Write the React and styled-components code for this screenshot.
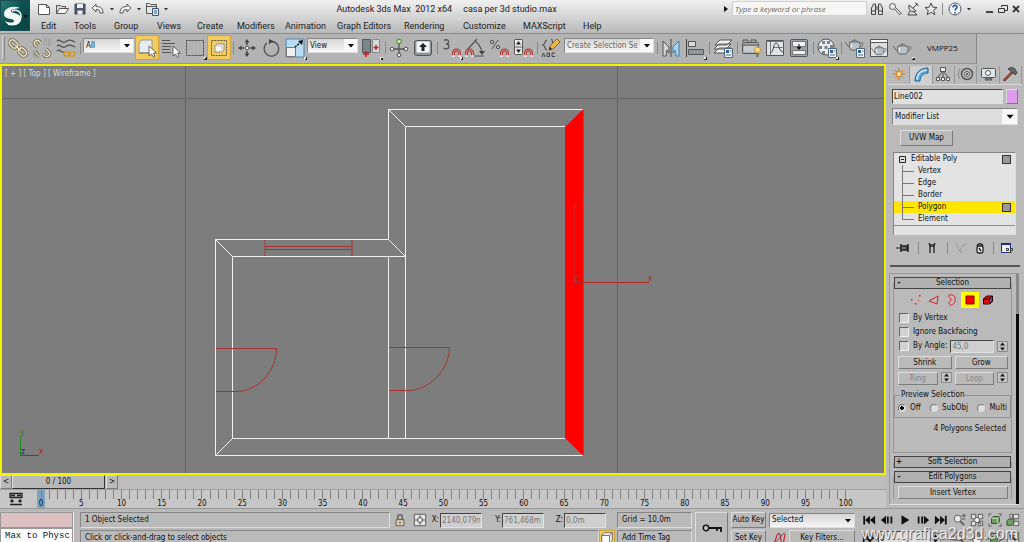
import React from 'react';
import styled, { createGlobalStyle, css } from 'styled-components';

const GlobalStyle = createGlobalStyle`
  * {
    box-sizing: border-box;
  }
  body {
    margin: 0;
    background: #bababa;
  }
  body, button, input, select {
    font-family: "DejaVu Sans Condensed", "DejaVu Sans", sans-serif;
    font-size: 8px;
    line-height: 10px;
    color: #111;
  }
  button, input, select, fieldset {
    margin: 0;
    padding: 0;
    border: 0;
    border-radius: 0;
    background: none;
  }
  svg {
    display: block;
    flex: none;
  }
`;

const raised = css`
  border: 1px solid;
  border-color: #dcdcdc #7c7c7c #7c7c7c #dcdcdc;
`;

const sunken = css`
  border: 1px solid;
  border-color: #858585 #dedede #dedede #858585;
`;

const AppContainer = styled.div`
  display: flex;
  flex-direction: column;
  height: 100vh;
  width: 100%;
  overflow: hidden;
`;

/* title and menus */

const Header = styled.header`
  display: flex;
  height: 34px;
  flex: none;
  background: linear-gradient(#f0f0f0, #d8d8d8 45%, #b8b8b8);
  border-bottom: 1px solid #8c8c8c;
`;

const AppButton = styled.button`
  width: 30px;
  height: 31px;
  background: linear-gradient(135deg, #2a7d78, #0b5150 45%, #0a4344);
  border: 1px solid #1b4d4e;
`;

const HeaderRows = styled.div`
  flex: 1;
  display: flex;
  flex-direction: column;
`;

const TitleRow = styled.div`
  display: flex;
  align-items: center;
  height: 18px;
`;

const QuickAccess = styled.div`
  display: flex;
  align-items: center;
  padding-left: 5px;
`;

const QuickButton = styled.button`
  display: flex;
  justify-content: center;
  width: ${props => (props.$small ? 9 : 18)}px;
`;

const Title = styled.h1`
  flex: 1;
  display: flex;
  justify-content: center;
  gap: 11px;
  margin: 0;
  font: 400 9px/12px Roboto, sans-serif;
  white-space: pre;
  color: #222;
`;

const InfoCenter = styled.div`
  display: flex;
  align-items: center;
`;

const SearchInput = styled.input`
  width: 135px;
  height: 15px;
  margin: 0 1px 0 3px;
  padding: 0 2px;
  background: #f6f6f6;
  border: 1px solid #d0d0d0;
  font: italic 8px/10px "Open Sans", sans-serif;
  &::placeholder {
    color: #666;
    opacity: 1;
  }
`;

const WindowButtons = styled.div`
  display: flex;
  padding: 0 2px 0 10px;
`;

const WindowButton = styled.button`
  display: flex;
  justify-content: center;
  width: 13px;
`;

const Menu = styled.nav`
  display: grid;
  grid-template-columns: 33px 40px 43px 40px 40px 48px 52px 67px 59px 60px 60px 40px;
  padding-left: 11px;
  height: 16px;
`;

const MenuItem = styled.button`
  display: flex;
  align-items: center;
  padding-top: 2px;
  font: 400 9px/12px Roboto, sans-serif;
  color: #1c1c1c;
  white-space: nowrap;
`;

/* main toolbar */

const Toolbar = styled.div`
  display: flex;
  align-items: center;
  align-self: flex-start;
  flex: none;
  height: 30px;
  padding: 0 18px 2px 0;
  background: #b3b3b3;
  border-right: 1px solid #858585;
  border-bottom: 1px solid #969696;
`;

const Handle = styled.div`
  width: 3px;
  height: 24px;
  margin: 0 1px 0 2px;
  border: 1px solid;
  border-color: #cfcfcf #8a8a8a #8a8a8a #cfcfcf;
`;

const ToolButton = styled.button`
  position: relative;
  display: flex;
  align-items: center;
  justify-content: center;
  width: 24px;
  height: 25px;
  ${props => props.$active && css`
    background: #f3cb5c;
    border: 1px solid #cfa23a;
  `}
  ${props => props.$flyout && css`
    &::after {
      content: '';
      position: absolute;
      right: 0;
      bottom: 0;
      width: 3px;
      height: 3px;
      background: linear-gradient(135deg, #eee 50%, #222 50%);
    }
  `}
`;

const Separator = styled.div`
  width: 1px;
  height: 12px;
  margin: 0 1px 0 2px;
  background: #878787;
`;

const SelectBox = styled.label`
  position: relative;
  display: block;
  width: ${props => (props.$width ? props.$width + 'px' : 'auto')};
  margin: ${props => props.$margin || '0'};
  svg {
    position: absolute;
    right: 1px;
    top: 1px;
    pointer-events: none;
  }
`;

const Select = styled.select`
  display: block;
  width: 100%;
  height: ${props => props.$height || 15}px;
  padding: 0 14px 0 2px;
  appearance: none;
  background: ${props => props.$fill || 'linear-gradient(#d6d6d6, #f6f6f6)'};
  color: ${props => props.$color || '#111'};
  ${sunken}
`;

const MacroButton = styled.button`
  margin-left: 12px;
  font: 400 8px/10px "Open Sans", sans-serif;
`;

/* viewport */

const Main = styled.main`
  flex: 1;
  display: flex;
  min-height: 0;
`;

const Work = styled.div`
  flex: 1;
  display: flex;
  flex-direction: column;
  min-width: 0;
`;

const Viewport = styled.section`
  position: relative;
  flex: 1;
  min-height: 0;
  background: #7d7d7d;
  border: 2px solid #f2f200;
  svg {
    width: 100%;
    height: 100%;
  }
`;

const ViewportLabel = styled.div`
  position: absolute;
  left: 3px;
  top: 3px;
  color: #dadada;
`;

const TimeSlider = styled.div`
  display: flex;
  height: 14px;
  background: #bdbdbd;
`;

const SliderButton = styled.button`
  width: ${props => props.$width || 12}px;
  height: 14px;
  background: #b9b9b9;
  ${raised}
  ${props => props.$width && css`
    border-right-color: #333;
    border-bottom-color: #333;
    margin-right: 1px;
  `}
`;

const TrackBar = styled.div`
  display: flex;
  height: 19px;
  background: #c6c6c6;
  border-top: 1px solid #a0a0a0;
  padding-right: 37px;
`;

const CurveButton = styled.button`
  display: flex;
  align-items: center;
  justify-content: center;
  width: 37px;
  padding-right: 6px;
`;

const Ruler = styled.div`
  flex: 1;
  display: flex;
`;

const Frame = styled.div`
  flex: 1 1 0;
  width: 0;
  display: flex;
  flex-direction: column;
  align-items: center;
  background: ${props => (props.$current ? '#7fa3bf' : 'none')};
  &::before {
    content: '';
    flex: none;
    width: 1px;
    height: 9px;
    background: #808080;
  }
`;

/* command panel */

const CommandPanel = styled.aside`
  width: 138px;
  flex: none;
  display: flex;
  flex-direction: column;
  padding: 2px 6px 0;
  background: #bababa;
`;

const Tabs = styled.div`
  display: flex;
  margin: 0 -4px 4px;
  border-bottom: 1px solid #d8d8d8;
`;

const Tab = styled.button`
  flex: 1;
  display: flex;
  justify-content: center;
  height: 18px;
  border-right: 1px solid #999;
  background: ${props => (props.$active ? '#cfcfcf' : 'none')};
`;

const NameRow = styled.div`
  display: flex;
  gap: 3px;
  margin-bottom: 4px;
`;

const Field = styled.input`
  flex: ${props => (props.$width ? 'none' : '1')};
  width: ${props => props.$width || 0}px;
  min-width: 0;
  height: ${props => props.$height || 15}px;
  padding: 0 1px;
  background: ${props => (props.$muted ? '#cfcfcf' : '#e0e0e0')};
  color: ${props => (props.$muted ? '#777' : '#111')};
  border: 1px solid;
  border-color: #444 #e0e0e0 #e0e0e0 #444;
`;

const Swatch = styled.button`
  width: 12px;
  height: 15px;
  background: #df9bee;
  ${raised}
`;

const PushButton = styled.button`
  flex: ${props => (props.$width ? 'none' : '1')};
  width: ${props => (props.$width ? props.$width + 'px' : 'auto')};
  height: ${props => props.$height || 13}px;
  color: ${props => (props.disabled ? '#868686' : '#111')};
  background: #bababa;
  white-space: nowrap;
  ${raised}
`;

const SetRow = styled.div`
  display: flex;
  padding: 5px 0 6px 8px;
`;

const Stack = styled.ul`
  height: 83px;
  flex: none;
  margin: 0 2px 4px 1px;
  padding: 0;
  list-style: none;
  background: #e3e3e3;
  ${sunken}
`;

const StackRow = styled.li`
  display: flex;
  align-items: center;
  height: 12px;
  padding: 0 4px;
  background: ${props => (props.$selected ? '#ffe600' : 'none')};
  span {
    flex: 1;
    padding-left: 4px;
  }
`;

const StackEnd = styled.li`
  border-top: 1px solid #8c8c8c;
`;

const StackMark = styled.i`
  width: 9px;
  height: 9px;
  background: #999;
  border: 1px solid #333;
`;

const StackTools = styled.div`
  display: flex;
  align-items: center;
  justify-content: space-between;
  height: 17px;
  padding: 0 4px 0 3px;
  margin-bottom: 9px;
`;

const Divider = styled.div`
  height: 2px;
  flex: none;
  margin: 0 -2px 6px;
  background: #555;
`;

const Rollouts = styled.div`
  flex: 1;
  min-height: 0;
  margin: 0 -1px 3px -3px;
  display: flex;
  border-top: 1px solid #999;
  border-left: 1px solid #999;
  border-bottom: 1px solid #ddd;
`;

const RolloutList = styled.div`
  flex: 1;
  min-width: 0;
  padding: 3px 4px 0 3px;
`;

const ScrollTrack = styled.div`
  display: flex;
  width: 3px;
  padding-top: 40px;
  background: #8a8a8a;
  &::after {
    content: '';
    flex: 1;
    background: #0c0c0c;
  }
`;

const Rollout = styled.section`
  margin: 0 0 3px;
  padding: 0 1px;
  background: linear-gradient(#999, #999) 0 6px / 1px 100% no-repeat,
    linear-gradient(#999, #999) 100% 6px / 1px 100% no-repeat;
  border-bottom: ${props => (props.$boxed ? '1px solid #999' : '0')};
`;

const RolloutHead = styled.button`
  display: grid;
  grid-template-columns: 8px 1fr 8px;
  width: 100%;
  height: 12px;
  background: #b0b0b0;
  border: 1px solid #444;
`;

const RolloutBody = styled.div`
  display: flex;
  flex-direction: column;
  gap: 3px;
  padding: 3px 3px 0 4px;
`;

const SubObjects = styled.div`
  display: flex;
  padding-left: 9px;
`;

const SubObject = styled.button`
  display: flex;
  align-items: center;
  justify-content: center;
  width: 18px;
  height: 16px;
  background: ${props => (props.$active ? '#ffff00' : 'none')};
`;

const Checks = styled.div`
  display: grid;
  grid-auto-rows: 14px;
`;

const CheckRow = styled.div`
  display: flex;
  align-items: center;
  gap: 3px;
  label {
    display: flex;
    align-items: center;
    gap: 3px;
    white-space: nowrap;
  }
`;

const Checkbox = styled.input.attrs({ type: 'checkbox' })`
  appearance: none;
  width: 10px;
  height: 10px;
  margin: 0 1px 0 1px;
  background: #d2d2d2;
  border: 1px solid;
  border-color: #666 #eee #eee #666;
`;

const Radio = styled.input.attrs({ type: 'radio' })`
  appearance: none;
  width: 8px;
  height: 8px;
  border-radius: 50%;
  background: #e0e0e0;
  border: 1px solid;
  border-color: #777 #ddd #ddd #777;
  &:checked {
    background: radial-gradient(#000 0 2px, #e0e0e0 2px);
  }
`;

const ButtonRow = styled.div`
  display: flex;
  gap: 3px;
`;

const Group = styled.fieldset`
  min-width: 0;
  margin: 2px -3px 0 -4px;
  padding: 0 2px 4px 3px;
  border: 1px solid #929292;
  legend {
    margin-left: 2px;
    padding: 0 1px;
  }
`;

const Radios = styled.div`
  display: flex;
  justify-content: space-between;
  padding: 3px 1px 0 0;
  label {
    display: flex;
    align-items: center;
    gap: 4px;
  }
`;

const Info = styled.p`
  margin: 3px 2px 18px;
  text-align: right;
`;

/* status bar */

const StatusBar = styled.footer`
  position: relative;
  flex: none;
  display: flex;
  height: 34px;
  padding-top: 3px;
  overflow: hidden;
  background: #bababa;
  border-top: 1px solid #999;
`;

const Listener = styled.div`
  width: 74px;
  flex: none;
  border-right: 1px solid #eee;
  margin-right: 6px;
`;

const ListenerLine = styled.input`
  display: block;
  width: 100%;
  height: 16px;
  padding-left: 4px;
  background: ${props => (props.$pink ? '#dcc0c2' : '#fff')};
  font: 400 9px/12px "Liberation Mono", monospace;
  border: 1px solid #999;
`;

const Column = styled.div`
  display: flex;
  flex-direction: column;
  gap: 2px;
  flex: ${props => (props.$grow ? '1' : 'none')};
  min-width: 0;
  margin-right: ${props => props.$space || 0}px;
`;

const Line = styled.div`
  display: flex;
  align-items: center;
  height: 16px;
  flex: none;
  padding-right: ${props => props.$inset || 0}px;
`;

const Prompt = styled.div`
  flex: ${props => (props.$width ? 'none' : '1')};
  width: ${props => (props.$width ? props.$width + 'px' : 'auto')};
  height: 16px;
  padding: 2px 4px;
  white-space: nowrap;
  ${sunken}
`;

const SmallButton = styled.button`
  display: flex;
  align-items: center;
  justify-content: center;
  width: ${props => props.$width || 20}px;
  height: 16px;
  ${props => props.$active && css`
    background: #f3cb5c;
    border: 1px solid #cfa23a;
  `}
`;

const Coordinate = styled.label`
  display: flex;
  align-items: center;
  justify-content: flex-end;
  width: ${props => props.$width || 62}px;
  gap: 1px;
`;

const KeyButton = styled.button`
  display: flex;
  align-items: center;
  justify-content: center;
  width: 33px;
  height: 34px;
  margin: 0 3px;
  flex: none;
  ${raised}
`;

const Spacer = styled.div`
  width: 2px;
  flex: none;
`;

const Watermark = styled.div`
  position: absolute;
  right: 6px;
  bottom: -2px;
  font: 400 16px/20px "Liberation Sans", sans-serif;
  color: #e9e9e9;
  text-shadow: 1px 1px 1px #555;
`;

const Icon = ({ size = 20, box = 20, children }) => (
  <svg
    width={size}
    height={size}
    viewBox={`0 0 ${box} ${box}`}
    fill="none"
    stroke="#555"
    aria-hidden="true"
  >
    {children}
  </svg>
);

const Caret = ({ light = true, size = 13 }) => (
  <Icon size={size} box={13}>
    {light && <path d="M0 0h13v13H0z" fill="#f8f8f8" stroke="none" />}
    <path d="M4 5h6L7 8.500z" fill="#000" stroke="none" />
  </Icon>
);

const magnet = (
  <g>
    <path d="M12.500 18v-3a3 3 0 0 1 6 0v3" stroke="#a33a35" strokeWidth="3" />
    <path d="M12.500 18v-3a3 3 0 0 1 6 0v3" stroke="#f0938a" strokeWidth="1" />
    <path d="M11 18h3M17 18h3" stroke="#eee" strokeWidth="1.500" />
  </g>
);

const teapot = (
  <g stroke="#666">
    <path d="M5 8h9c2 3 1 6-1 8H6C4 14 4 11 5 8z" fill="#b9c2c9" />
    <path d="M5 13C2 13 2 9 0 8M14.500 9c4-2 5 3 0 4M6 8c1-2 6-2 7 0M9.500 5v1" />
    <path d="M7 9.500c-1 1.500-1 3 0 4" stroke="#fff" />
  </g>
);

const settingsBadge = (
  <g>
    <path d="M11.500 10.500h8v9h-8z" fill="#eef2f6" stroke="#567" />
    <path d="M13 12h3v3h-3z" fill="#2a62a8" stroke="none" />
    <path d="M17 13h1.500M13 17h5" stroke="#567" />
  </g>
);

const cursor = (
  <path d="M12 8v10l2.500-2 2 3.500 1.500-1-1.500-3.500h3z" fill="#fff" stroke="#444" strokeWidth=".8" />
);

const tools = {
  link: (
    <g strokeWidth="3.200" stroke="#6b6756">
      <rect x="1" y="3" width="9" height="6" rx="3" transform="rotate(45 5.500 6)" />
      <rect x="10" y="11" width="9" height="6" rx="3" transform="rotate(45 14.500 14)" />
      <path d="M7 7l6 6" />
      <g stroke="#f0e3b8" strokeWidth="1.500">
        <rect x="1" y="3" width="9" height="6" rx="3" transform="rotate(45 5.500 6)" />
        <rect x="10" y="11" width="9" height="6" rx="3" transform="rotate(45 14.500 14)" />
        <path d="M7 7l6 6" />
      </g>
    </g>
  ),
  unlink: (
    <g>
      <path d="M5 9L3 7C1 5 4 1 7 3l2 2M14 11l3 3c2 2-1 6-4 4l-2-2M3 14l4 4" stroke="#6b6756" strokeWidth="3.200" />
      <path d="M5 9L3 7C1 5 4 1 7 3l2 2M14 11l3 3c2 2-1 6-4 4l-2-2M3 14l4 4" stroke="#f0e3b8" strokeWidth="1.500" />
      <path d="M12 1h7M12 3h7M12 5h7M12 7h7M1 13h5M1 15h5M1 17h5M1 19h6" stroke="#8a8a8a" strokeDasharray="1 1" />
    </g>
  ),
  bind: (
    <g>
      <path d="M1 3c3-3 5 3 8 1s5-3 10 0M1 8c3-3 5 3 8 1s5-3 10 0M1 13c3-3 5 3 8 1" strokeWidth="1.300" />
      <rect x="8" y="14" width="6" height="4" rx="2" stroke="#d39a24" strokeWidth="1.600" />
      <rect x="13" y="14" width="6" height="4" rx="2" stroke="#d39a24" strokeWidth="1.600" />
    </g>
  ),
  select: (
    <g>
      <path d="M2 5l3-3h10v10l-3 3H2z" fill="#e8edf2" stroke="#999" />
      <path d="M2 15h10l3-3" stroke="#777" />
      {cursor}
    </g>
  ),
  byName: (
    <g>
      <path d="M1 2.500h8M1 5.500h13M1 8.500h9M1 11.500h8M1 14.500h9" />
      {cursor}
    </g>
  ),
  region: <path d="M1.500 2.500h17v15h-17z" strokeDasharray="2 1" stroke="#444" />,
  crossing: (
    <g>
      <path d="M2.500 2.500h15v15h-15z" strokeDasharray="2 1" stroke="#555" />
      <path d="M6 8l2-2h7v6l-2 2H6z" fill="#fff" stroke="#889" />
      <path d="M6 8h7v6" stroke="#bbb" />
    </g>
  ),
  move: (
    <g>
      <path d="M10 3v4M10 13v4M3 10h4M13 10h4" stroke="#444" strokeWidth="1.500" />
      <path d="M10 1l2.500 3.500h-5zM10 19l2.500-3.500h-5zM1 10l3.500-2.500v5zM19 10l-3.500-2.500v5z" fill="#444" stroke="none" />
      <circle cx="10" cy="10" r="1.800" fill="#eee" />
    </g>
  ),
  rotate: (
    <g>
      <path d="M11 3.500a7.300 7.300 0 1 1-5 1.500" strokeWidth="1.300" />
      <path d="M8 1l5 2.500L8 6z" fill="#444" stroke="none" />
    </g>
  ),
  scale: (
    <g>
      <path d="M1 1h18v18H1z" fill="#b9dcf4" stroke="#4b86b4" />
      <path d="M1.500 9.500h9v9h-9z" fill="#f0f0f0" stroke="#777" />
      <path d="M10 9l6-5" stroke="#111" strokeWidth="1.500" strokeDasharray="2 1" />
      <path d="M18 2l-1 5-4-4z" fill="#111" stroke="none" />
    </g>
  ),
  pivot: (
    <g>
      <path d="M1.500 1.500h8v13h-8z" fill="#7d838a" />
      <path d="M11.500 1.500h7v13h-7z" fill="#d4dae0" stroke="#888" />
      <path d="M5 13v6M2 16h6M15 7v5M12.500 9.500h5" stroke="#d01818" strokeWidth="1.500" />
    </g>
  ),
  manipulate: (
    <g>
      <path d="M10 4v13M3 11h14" strokeWidth="1.300" />
      <circle cx="10" cy="3.500" r="2.300" fill="#bfe6a0" stroke="#3b8a2a" />
      <circle cx="3" cy="11" r="1.800" fill="#eee" />
      <circle cx="17" cy="11" r="1.800" fill="#eee" />
      <circle cx="10" cy="17" r="1.800" fill="#eee" />
    </g>
  ),
  keyboard: (
    <g>
      <rect x="1.500" y="2.500" width="17" height="15" rx="2" fill="#8d959c" />
      <rect x="3.500" y="3.500" width="13" height="11" rx="1" fill="#f2f5f7" stroke="#ccc" />
      <path d="M10 5l4 4h-2.500v4h-3V9H6z" fill="#222" stroke="none" />
    </g>
  ),
  snap: (
    <g>
      <path d="M3 2.500c2-1.500 5-.5 4.500 1.500C7.500 5.500 6 6 5 6c1.500 0 3 .7 3 2.500 0 2.500-3.500 3-5.500 1.500" strokeWidth="1.300" />
      {magnet}
    </g>
  ),
  angle: (
    <g>
      <path d="M2 12L12 1M9 18h10M10 3c4 3 6 7 7 11" strokeWidth="1.200" />
      <path d="M14 13h6l-3 4z" fill="#444" stroke="none" />
      <g transform="translate(-11 0)">{magnet}</g>
    </g>
  ),
  percent: (
    <g>
      <circle cx="3" cy="4" r="1.700" />
      <circle cx="9" cy="9" r="1.700" />
      <path d="M9 2l-6 9" />
      {magnet}
    </g>
  ),
  spinner: (
    <g>
      <rect x="1.500" y="1.500" width="8" height="15" rx="1" fill="#e8ecef" />
      <path d="M5.500 3L8 6.500H3zM5.500 15L8 11.500H3z" fill="#222" stroke="none" />
      <path d="M2 9h7" />
      {magnet}
    </g>
  ),
  named: (
    <g>
      <path d="M6 2C3 2 5 6 2 7c3 1 1 5 4 5M10 1c2 0 1 2 1.500 4" strokeWidth="1.200" />
      <path d="M8 12l1-4 7-7 3 3-7 7z" fill="#efb74a" stroke="#8a6420" />
      <path d="M8 12l1-3 2 2z" fill="#222" stroke="none" />
      <path d="M1 19l1.500-4L4 19M6 15v3.500h2.500V15zM14 15h-3v3.500h3" stroke="#444" />
    </g>
  ),
  mirror: (
    <g>
      <path d="M2 3l6 6v6l-2-3-1 6H2z" fill="#ccd2d7" />
      <path d="M18 3l-6 6v6l2-3 1 6h3z" fill="#a9d5f2" stroke="#3f7fae" />
      <path d="M10 1v18" stroke="#444" />
    </g>
  ),
  align: (
    <g>
      <path d="M1.500 1v18" stroke="#444" />
      <path d="M3.500 3.500h7v5h-7z" fill="#d8dde1" />
      <path d="M3.500 11.500h15v5h-15z" fill="#8f97a0" />
    </g>
  ),
  layers: (
    <g>
      <path d="M1 15l5-5h12l-5 5zM1 11l5-5h12l-5 5zM2 7l5-5h12l-5 5z" fill="#eef0f2" />
      {settingsBadge}
    </g>
  ),
  ribbon: (
    <g>
      <rect x="1.500" y="4.500" width="16" height="11" rx="1" fill="#a8afb6" />
      <path d="M2 4V2h5v2M10 4V2h5v2M2 7h15" />
      <path d="M3 8h13v6H3z" fill="#c6ccd1" stroke="none" />
      <circle cx="16.500" cy="12" r="3" fill="#f8d878" stroke="#c79b38" />
      <path d="M15 16h3M15 18h3" />
    </g>
  ),
  curve: (
    <g>
      <path d="M1.500 2.500h17v15h-17z" fill="#dfe3e6" />
      <path d="M1 3.500h18M5.500 3v14M8 9.500h11" stroke="#777" />
      <path d="M5 15c4 0 3-10 6-10s3 10 8 9" stroke="#444" />
    </g>
  ),
  schematic: (
    <g>
      <rect x="1.500" y="1.500" width="17" height="17" rx="1" fill="#9aa1a8" />
      <path d="M3.500 3.500h13v5h-13zM3.500 12.500h13v4h-13z" fill="#eef0f2" stroke="#777" />
      <path d="M10 6v4" stroke="#111" />
      <path d="M7.500 9h5L10 12z" fill="#111" stroke="none" />
    </g>
  ),
  material: (
    <g>
      <circle cx="9" cy="9" r="8" fill="#e8ebee" />
      <path d="M5 3h3v3H5zM10 3h3v3h-3zM2 8h3v3H2zM7.500 8h3v3h-3zM5 13h3v3H5zM13 7h3v3h-3z" fill="#7b848c" stroke="none" />
      {settingsBadge}
    </g>
  ),
  renderSetup: (
    <g>
      <g transform="translate(0 -4)">{teapot}</g>
      {settingsBadge}
    </g>
  ),
  renderFrame: (
    <g>
      <path d="M1.500 1.500h17v17h-17z" fill="#dde1e4" />
      <path d="M1.500 1.500h17v3h-17z" fill="#fff" />
      <g transform="translate(2 3) scale(.85)">{teapot}</g>
    </g>
  ),
  render: teapot,
};

const quick = {
  new: <path d="M1.500 2.500h8l3 3v7h-11zM9.500 2.500v3h3" fill="#fafafa" />,
  open: (
    <g>
      <path d="M1.500 11.500v-8h4l1 1h4v2" fill="#ddd" />
      <path d="M1.500 11.500l3-5h9l-3 5z" fill="#f4f4f4" />
    </g>
  ),
  save: (
    <g>
      <path d="M2 2h10v10H2z" fill="#4d5966" stroke="#445" />
      <path d="M4 2h6v4H4zM4.500 8.500h5v4h-5z" fill="#eee" stroke="none" />
    </g>
  ),
  undo: <path d="M1 6l4-4v2.500c5 0 7 2 7 6.500h-3c0-3-1-3.500-4-3.500V10z" fill="#f4f4f4" />,
  redo: <path d="M13 6L9 2v2.500c-5 0-7 2-7 6.500h3c0-3 1-3.500 4-3.500V10z" fill="#f4f4f4" />,
  project: (
    <g>
      <path d="M1.500 1.500h3l1 1h6v9h-10zM1.500 4.500h10" fill="#e8e8e8" />
      <path d="M7.500 6.500h6v7h-6z" fill="#dce8f4" stroke="#456" />
      <path d="M9 9h3M9 11h3" stroke="#26a" />
    </g>
  ),
  binoculars: (
    <g>
      <path d="M1.500 12.500V6l2-4h2v10.500zM12.500 12.500V6l-2-4h-2v10.500z" fill="#ddd" stroke="#444" />
      <path d="M6 5h2M6 7h2M2 9h3.500M8.500 9H12" stroke="#444" />
    </g>
  ),
  key: (
    <g>
      <circle cx="4.500" cy="4.500" r="3" fill="#eee" />
      <path d="M6.500 7l5 5.500 2-1-6-6" fill="#eee" />
    </g>
  ),
  dish: (
    <g stroke="#444">
      <path d="M3 3c-1 5 2 8 7 6z" fill="#ddd" />
      <path d="M7 6l3-3M10 2l1 1M4 9l-2 4h9l-3-3M9 1c2 0 3 1 3 3" />
    </g>
  ),
  star: <path d="M7 1l1.800 4.200 4.200.3-3.300 2.800 1.100 4.400L7 10.300l-3.800 2.400 1.100-4.400L1 5.500l4.200-.3z" fill="#eee" stroke="#444" />,
  help: (
    <g>
      <circle cx="7" cy="7" r="6" fill="#f4f7fb" stroke="#556" />
      <path d="M5 5.500c0-3 4-2.500 4-.3C9 6.500 7 6.700 7 8.500M7 10v1.500" stroke="#1c56a8" strokeWidth="1.600" />
    </g>
  ),
};

const tabIcons = [
  ['Create', (
    <g key="c" stroke="#d8761a">
      <path d="M8 2v12M2 8h12M4 4l8 8M12 4l-8 8" />
      <circle cx="8" cy="8" r="2.500" fill="#fff0a0" />
    </g>
  )],
  ['Modify', (
    <g key="m">
      <path d="M2 15C2 7 7 2 15 2v5c-5 0-8 3-8 8z" fill="#5fa8dc" stroke="#27618f" />
      <path d="M4 14C4 8 8 4 14 4" stroke="#c8e6fa" strokeWidth="1.500" />
    </g>
  )],
  ['Hierarchy', (
    <g key="h">
      <path d="M5.500 1.500h5v4h-5zM1.500 11.500h3v3h-3zM6.500 11.500h3v3h-3zM11.500 11.500h3v3h-3z" fill="#eee" />
      <path d="M8 6v5M7 6l-4 5M9 6l4 5" />
    </g>
  )],
  ['Motion', (
    <g key="o">
      <circle cx="9" cy="8" r="5.500" fill="#bbb" strokeWidth="1.500" />
      <circle cx="9" cy="8" r="2.500" fill="#eee" />
      <circle cx="9" cy="8" r=".8" fill="#333" />
      <path d="M2 3c-2 3-2 7 0 10" stroke="#888" />
    </g>
  )],
  ['Display', (
    <g key="d">
      <rect x="1.500" y="2.500" width="14" height="9" rx="1" fill="#dfe5ea" />
      <circle cx="8" cy="7" r="2.500" fill="#fff" />
      <path d="M5 14h7l-1-2H6z" fill="#888" />
    </g>
  )],
  ['Utilities', (
    <g key="u">
      <path d="M1 14L9 6l1.500 1.500L3 15z" fill="#a5532d" stroke="#633" strokeWidth=".8" />
      <path d="M6 3c3-2 5-2 7 0l2 4-2 2-3-3z" fill="#666" stroke="#333" strokeWidth=".8" />
    </g>
  )],
];

const play = {
  first: <path d="M1.500 3h2v10h-2zM9 3v10L3.500 8zM15 3v10L9 8z" />,
  previous: <path d="M7 3v10L1 8zM8 4h2v8H8zM12 4h2v8h-2z" />,
  play: <path d="M4 2.500v11L13 8z" />,
  next: <path d="M9 3v10l6-5zM6 4h2v8H6zM2 4h2v8H2z" />,
  last: <path d="M14.500 3h-2v10h2zM7 3v10l5.500-5zM1 3v10l6-5z" />,
  mode: <path d="M1 3h2v10H1zM9 3v10L3.500 8zM9 3v10l5-5z" />,
};

const zoomIcon = (
  <g>
    <circle cx="6.500" cy="6.500" r="4" fill="#e8e8e8" />
    <path d="M9.500 9.500L14 14" strokeWidth="2" />
    <path d="M11 3h5M13.500.5v5M11 7h4" />
  </g>
);

const zoomAllIcon = (
  <g>
    <path d="M1.500 1.500h5v5h-5zM9.500 1.500h5v5h-5zM1.500 9.500h5v5h-5zM9.500 9.500h5v5h-5z" fill="#ddd" />
    <circle cx="8" cy="8" r="3" fill="#eee" />
    <path d="M10 10l3 3" strokeWidth="1.500" />
  </g>
);

const extentsIcon = (
  <g>
    <path d="M1 4V1h3M12 1h3v3M15 12v3h-3M4 15H1v-3" />
    <path d="M4 6l2-2h7v6l-2 2H4z" fill="#6f9d62" stroke="#2e4a28" />
    <path d="M4 6h7v6M11 6l2-2" stroke="#d5e8cf" />
  </g>
);

const extentsAllIcon = (
  <g>
    <path d="M8.500 1.500h6v5h-6zM8.500 9.500h6v5h-6zM4.500 1.500h3v4h-3z" fill="#ddd" />
    <path d="M1 9l2-2h6v5l-2 2H1z" fill="#6f9d62" stroke="#2e4a28" />
  </g>
);

const regionIcon = (
  <g>
    <path d="M1.500 1.500h9v9h-9z" strokeDasharray="2 1" />
    <circle cx="8" cy="8" r="3" fill="#e8e8e8" />
    <path d="M10 10l4 4" strokeWidth="2" />
  </g>
);

const panIcon = (
  <path d="M3 8l2 1V3h2v4-5h2v5-4h2v4-2h2v6l-2 4H6L2 9z" fill="#f4f4f4" />
);

const orbitIcon = (
  <g>
    <path d="M3 8l2-2h6v5l-2 2H3z" fill="#6f9d62" stroke="#2e4a28" />
    <path d="M1 10C0 4 8 0 14 5M15 7c1 5-6 9-12 7" stroke="#222" />
  </g>
);

const maxIcon = (
  <g>
    <path d="M1.500 1.500h13v13h-13z" fill="#ddd" />
    <path d="M4 4l6 1-1.500 1.500L12 10l-2 1-3-3-2 2z" fill="#333" />
  </g>
);

const Tool = ({ icon, label, active, flyout }) => (
  <ToolButton type="button" aria-label={label} $active={active} $flyout={flyout}>
    <Icon>{tools[icon]}</Icon>
  </ToolButton>
);

const Quick = ({ icon, label }) => (
  <QuickButton type="button" aria-label={label}>
    <Icon size={14} box={14}>{quick[icon]}</Icon>
  </QuickButton>
);

const DropArrow = ({ label }) => (
  <QuickButton type="button" $small aria-label={label}>
    <Icon size={6} box={6}><path d="M1 2h4L3 4.500z" fill="#333" stroke="none" /></Icon>
  </QuickButton>
);

const Small = ({ label, width, active, solid, children }) => (
  <SmallButton type="button" aria-label={label} $width={width} $active={active}>
    <Icon size={14} box={16}>
      {solid ? <g fill="#111" stroke="none">{children}</g> : children}
    </Icon>
  </SmallButton>
);

const Dropdown = ({ label, value, width, height, fill, color, margin, caret }) => (
  <SelectBox $width={width} $margin={margin}>
    <Select aria-label={label} $height={height} $fill={fill} $color={color} defaultValue={value}>
      <option>{value}</option>
    </Select>
    <Caret light={caret} size={height === 17 ? 15 : 13} />
  </SelectBox>
);

const Spinner = () => (
  <Icon size={11} box={11}>
    <path d="M.5.5h10v10H.5z" fill="#c4c4c4" stroke="#8c8c8c" />
    <path d="M5.500 1.500L8 4.500H3zM5.500 9.500L8 6.500H3z" fill="#111" stroke="none" />
  </Icon>
);

const menus = [
  'Edit', 'Tools', 'Group', 'Views', 'Create', 'Modifiers', 'Animation',
  'Graph Editors', 'Rendering', 'Customize', 'MAXScript', 'Help',
];

const TitleBar = () => (
  <Header>
    <AppButton type="button" aria-label="Application menu">
      <Icon size={28} box={28}>
        <path d="M19 6C12 3 3 6 3 12c0 6 10 4 10 7 0 2-5 2-9 0 2 6 16 6 16-2 0-7-10-5-10-8 0-2 5-2 9-3z" fill="#f2f8f7" stroke="none" />
        <path d="M11 9c4-2 9 0 9 5 0 6-6 10-13 8" stroke="#f2f8f7" strokeWidth="1.500" />
        <path d="M22 13h5l-2.500 3z" fill="#011" stroke="none" />
      </Icon>
    </AppButton>
    <HeaderRows>
      <TitleRow>
        <QuickAccess>
          <Quick icon="new" label="New" />
          <Quick icon="open" label="Open" />
          <Quick icon="save" label="Save" />
          <Quick icon="undo" label="Undo" />
          <DropArrow label="Undo list" />
          <Quick icon="redo" label="Redo" />
          <DropArrow label="Redo list" />
          <Quick icon="project" label="Project folder" />
          <DropArrow label="Customize toolbar" />
        </QuickAccess>
        <Title>
          <span>Autodesk 3ds Max  2012 x64</span>
          <span>casa per 3d studio.max</span>
        </Title>
        <InfoCenter>
          <Icon size={6} box={6}><path d="M1 0l4 3-4 3z" fill="#111" stroke="none" /></Icon>
          <SearchInput aria-label="Search" placeholder="Type a keyword or phrase" />
          <Quick icon="binoculars" label="Search" />
          <Quick icon="key" label="Subscription" />
          <Quick icon="dish" label="Communication" />
          <Quick icon="star" label="Favorites" />
          <Separator />
          <Spacer />
          <Quick icon="help" label="Help" />
          <DropArrow label="Help list" />
        </InfoCenter>
        <WindowButtons>
          <WindowButton type="button" aria-label="Minimize">
            <Icon size={10} box={10}><path d="M1 8h7" stroke="#333" strokeWidth="1.800" /></Icon>
          </WindowButton>
          <WindowButton type="button" aria-label="Restore">
            <Icon size={10} box={10}>
              <path d="M3.500 3V1.500h6v5H7M.5 4.500h6v4h-6z" stroke="#333" />
            </Icon>
          </WindowButton>
          <WindowButton type="button" aria-label="Close">
            <Icon size={10} box={10}><path d="M2 2l6 6M8 2L2 8" stroke="#333" strokeWidth="1.800" /></Icon>
          </WindowButton>
        </WindowButtons>
      </TitleRow>
      <Menu>
        {menus.map(name => <MenuItem type="button" key={name}>{name}</MenuItem>)}
      </Menu>
    </HeaderRows>
  </Header>
);

const MainToolbar = () => (
  <Toolbar>
    <Handle />
    <Tool icon="link" label="Select and Link" />
    <Tool icon="unlink" label="Unlink Selection" />
    <Tool icon="bind" label="Bind to Space Warp" />
    <Separator />
    <Dropdown label="Selection filter" value="All" width={51} margin="-4px 1px 0" />
    <Tool icon="select" label="Select Object" active />
    <Tool icon="byName" label="Select by Name" />
    <Tool icon="region" label="Selection Region" flyout />
    <Tool icon="crossing" label="Window Crossing" active />
    <Separator />
    <Tool icon="move" label="Move" />
    <Tool icon="rotate" label="Rotate" />
    <Tool icon="scale" label="Scale" flyout />
    <Dropdown label="Coordinate system" value="View" width={51} margin="-4px 1px 0 0" />
    <Tool icon="pivot" label="Use Pivot Center" flyout />
    <Separator />
    <Tool icon="manipulate" label="Manipulate" />
    <Tool icon="keyboard" label="Keyboard Override" />
    <Separator />
    <Tool icon="snap" label="Snaps" flyout />
    <Tool icon="angle" label="Angle Snap" />
    <Tool icon="percent" label="Percent Snap" />
    <Tool icon="spinner" label="Spinner Snap" />
    <Separator />
    <Tool icon="named" label="Edit Named Selections" />
    <Dropdown label="Named selection" value="Create Selection Se" width={90} color="#666" margin="-4px 1px 0" />
    <Separator />
    <Tool icon="mirror" label="Mirror" />
    <Tool icon="align" label="Align" flyout />
    <Separator />
    <Tool icon="layers" label="Layers" />
    <Separator />
    <Tool icon="ribbon" label="Ribbon" />
    <Tool icon="curve" label="Curve Editor" />
    <Tool icon="schematic" label="Schematic View" />
    <Separator />
    <Tool icon="material" label="Material Editor" flyout />
    <Separator />
    <Tool icon="renderSetup" label="Render Setup" />
    <Tool icon="renderFrame" label="Rendered Frame" />
    <Tool icon="render" label="Render" flyout />
    <MacroButton type="button">VMPP25</MacroButton>
  </Toolbar>
);

const FloorPlan = () => (
  <svg fill="none" role="img" aria-label="Floor plan">
    <g transform="translate(-2 -66)">
      <path d="M185.500 0v600M617.500 0v600M0 98.500h2000" stroke="#656565" />
      <g stroke="#f0f0f0">
        <path d="M583 109.500H388.500v130h-173v216H583" />
        <path d="M565 126.500H405.500v311.500M405.500 256.500h-173v182H565M388.500 256.500v182" />
        <path d="M388.500 109.500l17 17M388.500 239.500l17 17M215.500 239.500l17 17M215.500 455.500l17-17" />
      </g>
      <path d="M583.500 109v347L565 438V127z" fill="#ff0000" />
      <g stroke="#a83232">
        <path d="M265 240v16M352 240v16M265 246.500h87M265 249.500h87" />
        <path d="M216 348.500h60.500c0 22-18 43-40 43H216" />
        <path d="M389 347.500h60.500c0 22-20 43-42 43H389" />
      </g>
      <path d="M574.500 282.500v-76" stroke="#e01818" />
      <path d="M574 282.500h75" stroke="#b52626" />
      <path d="M20.500 455v-17l2-3" stroke="#1d8a1d" />
      <path d="M20 455.500h19" stroke="#c01818" />
      <g fontSize="8">
        <text x="648" y="281" fill="#b52626">x</text>
        <text x="574" y="281" fill="#a04040">z</text>
        <text x="574" y="206" fill="#d02020">y</text>
        <text x="20" y="435" fill="#1d8a1d">y</text>
        <text x="21" y="454" fill="#1818b0">z</text>
        <text x="39" y="454" fill="#c01818">x</text>
      </g>
    </g>
  </svg>
);

const frames = Array.from({ length: 101 }, (_, i) => i);

const Timeline = () => (
  <>
    <TimeSlider>
      <SliderButton type="button">&lt;</SliderButton>
      <SliderButton type="button" $width={93}>0 / 100</SliderButton>
      <SliderButton type="button">&gt;</SliderButton>
    </TimeSlider>
    <TrackBar>
      <CurveButton type="button" aria-label="Open Mini Curve Editor">
        <Icon size={14} box={14}>
          <path d="M1 1.500h12v4H1zM1 12.500h12M2 3.500h4M8 3.500h4" stroke="#222" strokeWidth="1.300" />
          <path d="M1 9l2-2 2 2-2 2zM9 9l2-2 2 2-2 2z" fill="#222" stroke="none" />
        </Icon>
      </CurveButton>
      <Ruler>
        {frames.map(i => (
          <Frame key={i} $current={i === 0}>{i % 5 === 0 && <span>{i}</span>}</Frame>
        ))}
      </Ruler>
    </TrackBar>
  </>
);

const levels = ['Vertex', 'Edge', 'Border', 'Polygon', 'Element'];

const ModifierStack = () => (
  <Stack>
    <StackRow>
      <Icon size={9} box={9}>
        <path d="M1.500 1.500h6v6h-6zM3 4.500h3" stroke="#222" />
      </Icon>
      <span>Editable Poly</span>
      <StackMark />
    </StackRow>
    {levels.map(name => (
      <StackRow key={name} $selected={name === 'Polygon'}>
        <svg width="16" height="12" stroke="#777" aria-hidden="true">
          <path fill="none" d={name === 'Element' ? 'M4.500 0v6.500H16' : 'M4.500 0v12M4 6.500h12'} />
        </svg>
        <span>{name}</span>
        {name === 'Polygon' && <StackMark />}
      </StackRow>
    ))}
    <StackEnd />
  </Stack>
);

const StackButtons = () => (
  <StackTools>
    <SmallButton type="button" $width={16} aria-label="Pin Stack">
      <Icon size={14} box={14}>
        <path d="M0 7h5" stroke="#222" />
        <path d="M5 3v8M5 5h6v4H5M12 3v8" stroke="#222" fill="#777" strokeWidth="1.500" />
      </Icon>
    </SmallButton>
    <Separator />
    <SmallButton type="button" $width={16} aria-label="Show End Result">
      <Icon size={12} box={12}>
        <path d="M3 1l1 3v7M9 1L8 4v7M5 2v3M7 2v3" stroke="#222" strokeWidth="1.300" />
      </Icon>
    </SmallButton>
    <Separator />
    <SmallButton type="button" $width={14} aria-label="Make Unique">
      <Icon size={12} box={12}>
        <path d="M1 2l4 7 2-4 4-4M6 9v2" stroke="#8d8d8d" strokeDasharray="2 1" />
      </Icon>
    </SmallButton>
    <SmallButton type="button" $width={14} aria-label="Remove Modifier">
      <Icon size={12} box={12}>
        <rect x="3" y="4" width="6" height="7" rx="2" fill="#eee" stroke="#222" strokeWidth="1.300" />
        <path d="M3 4c1-3 5-3 6 0M5 6l2 3" stroke="#222" strokeWidth="1.500" />
      </Icon>
    </SmallButton>
    <Separator />
    <SmallButton type="button" $width={14} aria-label="Configure Sets">
      <Icon size={12} box={12}>
        <path d="M.5 1.500h9v9h-9z" fill="#eee" stroke="#1c2a8c" />
        <path d="M0 2h10" stroke="#1c2a8c" strokeWidth="2" />
        <path d="M5.500 6.500h2v2h-2zM9.500 6.500h2v2h-2zM6.500 10.500h4" fill="#fff" stroke="#333" />
      </Icon>
    </SmallButton>
  </StackTools>
);

const SelectionRollout = () => (
  <Rollout $boxed>
    <RolloutHead type="button"><b>-</b><span>Selection</span></RolloutHead>
    <RolloutBody>
      <SubObjects>
        <SubObject type="button" aria-label="Vertex">
          <Icon size={12} box={12}>
            <path d="M1 5h1.500v1.500H1zM5 9h1.500v1.500H5zM9 1h1.500v1.500H9zM8 6h1v1H8z" fill="#e02020" stroke="none" />
          </Icon>
        </SubObject>
        <SubObject type="button" aria-label="Edge">
          <Icon size={12} box={12}><path d="M1 7l9-5-1 8z" stroke="#e02020" /></Icon>
        </SubObject>
        <SubObject type="button" aria-label="Border">
          <Icon size={12} box={12}>
            <path d="M3 1c5-1 7 2 6 6-1 5-6 5-6 2 0-2 3-2 2-4S1 3 3 1z" stroke="#e02020" />
          </Icon>
        </SubObject>
        <SubObject type="button" aria-label="Polygon" $active>
          <Icon size={12} box={12}><path d="M2 2h8v8H2z" fill="#f00" stroke="#800" /></Icon>
        </SubObject>
        <SubObject type="button" aria-label="Element">
          <Icon size={12} box={12}>
            <path d="M1.500 5l3-3h6v5l-3 3h-6z" fill="#e00" stroke="#200" />
            <path d="M7.500 5v5l3-3V2z" fill="#704a9a" stroke="#200" />
            <path d="M1.500 5h6" stroke="#200" />
          </Icon>
        </SubObject>
      </SubObjects>
      <Checks>
        <CheckRow><label><Checkbox />By Vertex</label></CheckRow>
        <CheckRow><label><Checkbox />Ignore Backfacing</label></CheckRow>
        <CheckRow>
          <label><Checkbox />By Angle:</label>
          <Field aria-label="Angle" defaultValue="45,0" $muted $height={13} />
          <Spinner />
        </CheckRow>
      </Checks>
      <ButtonRow>
        <PushButton type="button">Shrink</PushButton>
        <PushButton type="button">Grow</PushButton>
      </ButtonRow>
      <ButtonRow>
        <PushButton type="button" disabled>Ring</PushButton>
        <Spinner />
        <PushButton type="button" disabled>Loop</PushButton>
        <Spinner />
      </ButtonRow>
      <Group>
        <legend>Preview Selection</legend>
        <Radios>
          <label><Radio name="preview" defaultChecked />Off</label>
          <label><Radio name="preview" />SubObj</label>
          <label><Radio name="preview" />Multi</label>
        </Radios>
      </Group>
      <Info>4 Polygons Selected</Info>
    </RolloutBody>
  </Rollout>
);

const Panel = () => (
  <CommandPanel>
    <Tabs>
      {tabIcons.map(([label, icon]) => (
        <Tab type="button" key={label} aria-label={label} $active={label === 'Modify'}>
          <Icon size={16} box={16}>{icon}</Icon>
        </Tab>
      ))}
    </Tabs>
    <NameRow>
      <Field aria-label="Object name" defaultValue="Line002" />
      <Swatch type="button" aria-label="Object color" />
    </NameRow>
    <Dropdown label="Modifier List" value="Modifier List" height={17} fill="#dedede" />
    <SetRow>
      <PushButton type="button" $width={53} $height={16}>UVW Map</PushButton>
    </SetRow>
    <ModifierStack />
    <StackButtons />
    <Divider />
    <Rollouts>
      <RolloutList>
        <SelectionRollout />
        <Rollout>
          <RolloutHead type="button"><b>+</b><span>Soft Selection</span></RolloutHead>
        </Rollout>
        <Rollout>
          <RolloutHead type="button"><b>-</b><span>Edit Polygons</span></RolloutHead>
          <RolloutBody>
            <ButtonRow>
              <PushButton type="button">Insert Vertex</PushButton>
            </ButtonRow>
          </RolloutBody>
        </Rollout>
      </RolloutList>
      <ScrollTrack />
    </Rollouts>
  </CommandPanel>
);

const Status = () => (
  <StatusBar>
    <Listener>
      <ListenerLine $pink aria-label="Macro recorder" />
      <ListenerLine aria-label="Listener" defaultValue="Max to Physc:" />
    </Listener>
    <Column $grow $space={2}>
      <Line $inset={9}>
        <Prompt>1 Object Selected</Prompt>
        <Small label="Selection Lock">
          <path d="M3.500 7.500h9v7h-9z" fill="#d8cda8" />
          <path d="M5.500 7V4c0-3 5-3 5 0v3M8 10v2" strokeWidth="1.500" />
        </Small>
        <Small label="Absolute Mode">
          <path d="M1.500 1.500h13v13h-13z" fill="#e4e4e4" />
          <circle cx="8" cy="8" r="3" />
          <path d="M8 2v4M8 10v4M2 8h4M10 8h4" />
        </Small>
        <Coordinate $width={52}>X:<Field defaultValue="2140,079m" $muted $width={42} /></Coordinate>
        <Coordinate>Y:<Field defaultValue="761,468m" $muted $width={42} /></Coordinate>
        <Coordinate>Z:<Field defaultValue="0,0m" $muted $width={42} /></Coordinate>
      </Line>
      <Line>
        <Prompt>Click or click-and-drag to select objects</Prompt>
        <Small label="Adaptive Degradation" width={16} active>
          <path d="M2 5l3-3h9v9l-3 3H2z" fill="#fff" />
          <path d="M2 5h9v9M11 5l3-3" />
        </Small>
      </Line>
    </Column>
    <Column>
      <Line><Prompt $width={75}>Grid = 10,0m</Prompt></Line>
      <Line><Prompt $width={75}>Add Time Tag</Prompt></Line>
    </Column>
    <KeyButton type="button" aria-label="Set Keys">
      <Icon size={20}>
        <circle cx="4" cy="9" r="2.800" stroke="#111" strokeWidth="1.300" />
        <path d="M7 9h12v4M15 9v3" stroke="#111" strokeWidth="1.800" />
      </Icon>
    </KeyButton>
    <Column $space={3}>
      <PushButton type="button" $width={35} $height={16}>Auto Key</PushButton>
      <PushButton type="button" $width={35} $height={16}>Set Key</PushButton>
    </Column>
    <Column $space={5}>
      <Line><Dropdown label="Key set" value="Selected" width={86} caret={false} /></Line>
      <Line>
        <Small label="Tangents">
          <path d="M1 14c4 0 3-11 7-11 3 0 1 11 4 11 2 0 2-8 3-11" stroke="#c22" strokeWidth="1.300" />
          <path d="M2 15L14 2" stroke="#446" />
        </Small>
        <PushButton type="button" $width={66} $height={16}>Key Filters...</PushButton>
      </Line>
    </Column>
    <Column>
      <Line>
        <Small label="Go to Start" width={18} solid>{play.first}</Small>
        <Small label="Previous Frame" width={18} solid>{play.previous}</Small>
        <Small label="Play" width={18} solid>{play.play}</Small>
        <Small label="Next Frame" width={18} solid>{play.next}</Small>
        <Small label="Go to End" width={18} solid>{play.last}</Small>
      </Line>
      <Line>
        <Small label="Key Mode" width={18} solid>{play.mode}</Small>
        <Field aria-label="Current frame" defaultValue="0" $width={52} />
        <Spinner />
      </Line>
    </Column>
    <Column $space={2}>
      <Line>
        <Small label="Zoom" width={18}>{zoomIcon}</Small>
        <Small label="Zoom All" width={18}>{zoomAllIcon}</Small>
        <Small label="Zoom Extents" width={18}>{extentsIcon}</Small>
        <Small label="Zoom Extents All" width={18}>{extentsAllIcon}</Small>
      </Line>
      <Line>
        <Small label="Zoom Region" width={18}>{regionIcon}</Small>
        <Small label="Pan View" width={18}>{panIcon}</Small>
        <Small label="Orbit" width={18}>{orbitIcon}</Small>
        <Small label="Maximize Viewport" width={18}>{maxIcon}</Small>
      </Line>
    </Column>
    <Watermark>www.grafica2d3d.com</Watermark>
  </StatusBar>
);

const App = () => (
  <AppContainer>
    <GlobalStyle />
    <TitleBar />
    <MainToolbar />
    <Main>
      <Work>
        <Viewport>
          <FloorPlan />
          <ViewportLabel>[ + ] [ Top ] [ Wireframe ]</ViewportLabel>
        </Viewport>
        <Timeline />
      </Work>
      <Panel />
    </Main>
    <Status />
  </AppContainer>
);

export default App;
